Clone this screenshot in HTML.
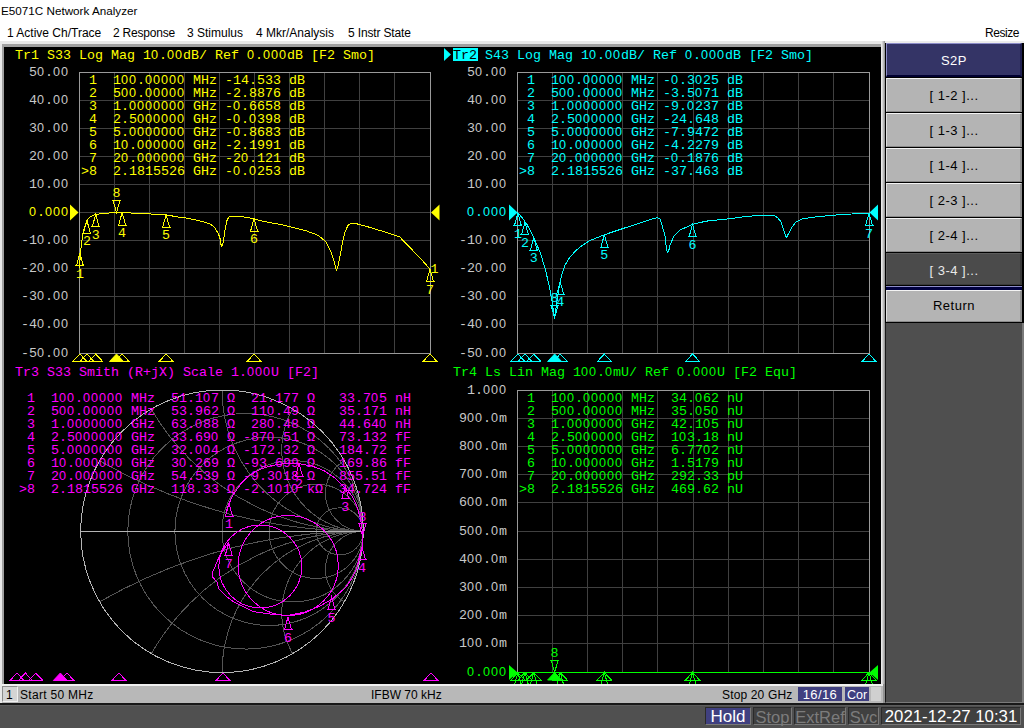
<!DOCTYPE html>
<html><head><meta charset="utf-8"><title>E5071C</title><style>
html,body{margin:0;padding:0}
body{width:1024px;height:728px;overflow:hidden;background:#fff;position:relative}
.a{position:absolute}
.ui{position:absolute;font-family:"Liberation Sans",sans-serif;font-size:12px;line-height:14px;color:#000;white-space:pre}
.m{position:absolute;font-family:"Liberation Mono",monospace;font-size:13.333px;line-height:13px;white-space:pre}
.z{font-style:normal;font-family:"Liberation Sans",sans-serif;font-size:12.6px;letter-spacing:1px;line-height:0}
.btn{position:absolute;left:886px;width:136px;height:34px;background:#b4b4b4;box-sizing:border-box;border-top:1px solid #f4f4f4;border-left:1px solid #e0e0e0;border-bottom:1px solid #8a8a8a;border-right:2px solid #8e8e8e}
.bt{position:absolute;left:886px;width:136px;font-family:"Liberation Sans",sans-serif;font-size:13px;line-height:16px;text-align:center;color:#000;white-space:pre;letter-spacing:0.5px}
</style></head><body>

<div class="ui" style="left:1px;top:4px;font-size:11.7px">E5071C Network Analyzer</div>
<div class="ui" style="left:7px;top:26px;letter-spacing:0px">1 Active Ch/Trace</div>
<div class="ui" style="left:113px;top:26px;letter-spacing:-0.2px">2 Response</div>
<div class="ui" style="left:187px;top:26px;letter-spacing:0px">3 Stimulus</div>
<div class="ui" style="left:256px;top:26px;letter-spacing:0px">4 Mkr/Analysis</div>
<div class="ui" style="left:348px;top:26px;letter-spacing:-0.15px">5 Instr State</div>
<div class="ui" style="left:985px;top:26px;letter-spacing:-0.45px">Resize</div>
<div class="a" style="left:0;top:41px;width:1024px;height:2px;background:#ececec"></div>
<div class="a" style="left:0;top:41px;width:886px;height:645px;background:#e8e8e8"></div>
<div class="a" style="left:2px;top:44px;width:879px;height:640px;background:#a0a0a0"></div>
<div class="a" style="left:4px;top:47px;width:877px;height:637px;background:#000"></div>
<svg class="a" style="left:0;top:0" width="1024" height="728" viewBox="0 0 1024 728"><defs><clipPath id="cc"><rect x="4" y="47" width="877" height="637"/></clipPath></defs><g clip-path="url(#cc)"><path d="M114.5 72V353M149.5 72V353M184.5 72V353M219.5 72V353M254.5 72V353M289.5 72V353M324.5 72V353M359.5 72V353M394.5 72V353M79 100.5H430M79 128.5H430M79 156.5H430M79 184.5H430M79 212.5H430M79 240.5H430M79 268.5H430M79 296.5H430M79 324.5H430" stroke="#404040" stroke-width="1" fill="none" shape-rendering="crispEdges"/>
<path d="M79.5 72.5H430.5V353.5H79.5Z" stroke="#9a9a9a" stroke-width="1" fill="none" shape-rendering="crispEdges"/>
<path d="M444 48L451 54.5L444 61Z" fill="#00ffff"/>
<rect x="453" y="48" width="25" height="13" fill="#00ffff"/>
<path d="M552.5 72V353M587.5 72V353M622.5 72V353M657.5 72V353M693.5 72V353M728.5 72V353M763.5 72V353M798.5 72V353M833.5 72V353M517 100.5H869M517 128.5H869M517 156.5H869M517 184.5H869M517 212.5H869M517 240.5H869M517 268.5H869M517 296.5H869M517 324.5H869" stroke="#404040" stroke-width="1" fill="none" shape-rendering="crispEdges"/>
<path d="M517.5 72.5H869.5V353.5H517.5Z" stroke="#9a9a9a" stroke-width="1" fill="none" shape-rendering="crispEdges"/>
<path d="M552.5 390V672M587.5 390V672M622.5 390V672M657.5 390V672M693.5 390V672M728.5 390V672M763.5 390V672M798.5 390V672M833.5 390V672M517 418.5H869M517 446.5H869M517 474.5H869M517 502.5H869M517 531.5H869M517 559.5H869M517 587.5H869M517 615.5H869M517 643.5H869" stroke="#404040" stroke-width="1" fill="none" shape-rendering="crispEdges"/>
<path d="M517.5 390.5H869.5V672.5H517.5Z" stroke="#9a9a9a" stroke-width="1" fill="none" shape-rendering="crispEdges"/>
<path d="M79.50 268.00 L80.30 256.00 L81.20 246.00 L82.50 236.00 L84.50 227.00 L86.90 220.60 L90.00 217.00 L95.70 214.40 L105.00 213.20 L116.50 212.60 L122.10 212.60 L135.00 213.20 L155.00 214.20 L166.10 214.90 L180.00 217.30 L186.00 218.00 L192.50 219.30 L200.00 221.00 L206.00 222.50 L211.00 224.50 L215.00 228.00 L218.50 234.00 L220.50 240.00 L221.00 244.50 L221.80 247.00 L222.70 244.50 L223.50 240.00 L225.00 230.00 L227.00 220.50 L228.50 217.50 L231.00 216.00 L238.00 216.00 L245.00 217.20 L254.10 218.70 L260.00 220.50 L268.00 222.30 L281.00 224.50 L306.00 230.70 L318.50 235.50 L326.00 242.00 L331.00 252.00 L334.00 261.00 L335.50 267.50 L336.50 270.00 L337.60 267.50 L339.00 261.00 L341.00 251.00 L343.00 240.00 L345.00 232.00 L348.00 225.50 L351.00 223.30 L355.00 223.30 L368.50 227.00 L385.00 232.00 L399.75 237.00 L408.50 246.00 L421.00 259.00 L430.30 269.50" stroke="#ffff00" stroke-width="1" fill="none" stroke-linejoin="round" stroke-linecap="round" shape-rendering="crispEdges"/>
<path d="M75.38 265.84H84.38M76.38 265.84L79.88 253.34L83.38 265.84" stroke="#ffff00" stroke-width="1" fill="none" shape-rendering="crispEdges"/><text x="79.88" y="277.84" fill="#ffff00" font-family="Liberation Mono" font-size="13.333" text-anchor="middle">1</text>
<path d="M82.42 233.11H91.42M83.42 233.11L86.92 220.61L90.42 233.11" stroke="#ffff00" stroke-width="1" fill="none" shape-rendering="crispEdges"/><text x="86.92" y="245.11" fill="#ffff00" font-family="Liberation Mono" font-size="13.333" text-anchor="middle">2</text>
<path d="M91.21 226.87H100.21M92.21 226.87L95.71 214.37L99.21 226.87" stroke="#ffff00" stroke-width="1" fill="none" shape-rendering="crispEdges"/><text x="95.71" y="238.87" fill="#ffff00" font-family="Liberation Mono" font-size="13.333" text-anchor="middle">3</text>
<path d="M117.61 225.11H126.61M118.61 225.11L122.11 212.61L125.61 225.11" stroke="#ffff00" stroke-width="1" fill="none" shape-rendering="crispEdges"/><text x="122.11" y="237.11" fill="#ffff00" font-family="Liberation Mono" font-size="13.333" text-anchor="middle">4</text>
<path d="M161.59 227.44H170.59M162.59 227.44L166.09 214.94L169.59 227.44" stroke="#ffff00" stroke-width="1" fill="none" shape-rendering="crispEdges"/><text x="166.09" y="239.44" fill="#ffff00" font-family="Liberation Mono" font-size="13.333" text-anchor="middle">5</text>
<path d="M249.56 231.18H258.56M250.56 231.18L254.06 218.68L257.56 231.18" stroke="#ffff00" stroke-width="1" fill="none" shape-rendering="crispEdges"/><text x="254.06" y="243.18" fill="#ffff00" font-family="Liberation Mono" font-size="13.333" text-anchor="middle">6</text>
<path d="M425.50 281.54H434.50M426.50 281.54L430.00 269.04L433.50 281.54" stroke="#ffff00" stroke-width="1" fill="none" shape-rendering="crispEdges"/><text x="430.00" y="293.54" fill="#ffff00" font-family="Liberation Mono" font-size="13.333" text-anchor="middle">7</text>
<path d="M112.00 200.07H121.00M113.00 200.07L116.50 212.57L120.00 200.07" stroke="#ffff00" stroke-width="1" fill="none" shape-rendering="crispEdges"/><text x="116.50" y="197.07" fill="#ffff00" font-family="Liberation Mono" font-size="13.333" text-anchor="middle">8</text>
<text x="434.50" y="273.00" fill="#ffff00" font-family="Liberation Mono" font-size="13.333" text-anchor="middle">1</text>
<path d="M70 204.5L78.5 212.5L70 220.5Z" fill="#ffff00"/>
<path d="M439.5 204.5L431 212.5L439.5 220.5Z" fill="#ffff00"/>
<path d="M79.88 354.00L86.88 361.50H72.88Z" fill="none" stroke="#ffff00" stroke-width="1" stroke-linejoin="miter" shape-rendering="crispEdges"/>
<path d="M86.92 354.00L93.92 361.50H79.92Z" fill="none" stroke="#ffff00" stroke-width="1" stroke-linejoin="miter" shape-rendering="crispEdges"/>
<path d="M95.71 354.00L102.71 361.50H88.71Z" fill="none" stroke="#ffff00" stroke-width="1" stroke-linejoin="miter" shape-rendering="crispEdges"/>
<path d="M122.11 354.00L129.11 361.50H115.11Z" fill="none" stroke="#ffff00" stroke-width="1" stroke-linejoin="miter" shape-rendering="crispEdges"/>
<path d="M166.09 354.00L173.09 361.50H159.09Z" fill="none" stroke="#ffff00" stroke-width="1" stroke-linejoin="miter" shape-rendering="crispEdges"/>
<path d="M254.06 354.00L261.06 361.50H247.06Z" fill="none" stroke="#ffff00" stroke-width="1" stroke-linejoin="miter" shape-rendering="crispEdges"/>
<path d="M430.00 354.00L437.00 361.50H423.00Z" fill="none" stroke="#ffff00" stroke-width="1" stroke-linejoin="miter" shape-rendering="crispEdges"/>
<path d="M116.50 354.00L123.50 361.50H109.50Z" fill="#ffff00" stroke="#ffff00" stroke-width="1"/>
<path d="M517.50 212.50 L522.00 217.50 L527.00 224.50 L533.00 236.00 L540.00 252.00 L545.00 268.00 L549.00 285.00 L552.00 301.00 L554.60 317.80 L557.00 301.00 L560.00 282.00 L562.00 274.00 L565.00 265.00 L570.00 257.00 L576.00 250.50 L582.00 245.50 L590.00 240.50 L600.00 236.50 L604.30 234.80 L620.00 229.50 L640.00 223.00 L654.00 218.20 L658.00 217.80 L660.00 219.00 L662.00 225.00 L665.00 236.00 L666.50 249.50 L667.70 253.00 L669.00 249.50 L670.00 245.00 L674.00 236.00 L680.00 230.00 L688.00 226.50 L692.50 224.40 L700.00 222.50 L710.00 220.50 L720.00 219.80 L735.00 218.00 L745.00 216.50 L760.00 215.50 L772.00 215.50 L775.00 216.00 L778.00 218.00 L781.00 222.00 L783.00 228.00 L785.50 235.50 L786.50 237.50 L787.50 235.50 L789.00 233.00 L792.00 227.00 L796.00 222.00 L802.00 219.00 L815.00 217.00 L830.00 215.50 L845.00 214.20 L869.00 213.50" stroke="#00ffff" stroke-width="1" fill="none" stroke-linejoin="round" stroke-linecap="round" shape-rendering="crispEdges"/>
<path d="M513.38 225.85H522.38M514.38 225.85L517.88 213.35L521.38 225.85" stroke="#00ffff" stroke-width="1" fill="none" shape-rendering="crispEdges"/><text x="517.88" y="237.85" fill="#00ffff" font-family="Liberation Mono" font-size="13.333" text-anchor="middle">1</text>
<path d="M520.44 234.85H529.44M521.44 234.85L524.94 222.35L528.44 234.85" stroke="#00ffff" stroke-width="1" fill="none" shape-rendering="crispEdges"/><text x="524.94" y="246.85" fill="#00ffff" font-family="Liberation Mono" font-size="13.333" text-anchor="middle">2</text>
<path d="M529.26 250.36H538.26M530.26 250.36L533.76 237.86L537.26 250.36" stroke="#00ffff" stroke-width="1" fill="none" shape-rendering="crispEdges"/><text x="533.76" y="262.36" fill="#00ffff" font-family="Liberation Mono" font-size="13.333" text-anchor="middle">3</text>
<path d="M555.73 294.26H564.73M556.73 294.26L560.23 281.76L563.73 294.26" stroke="#00ffff" stroke-width="1" fill="none" shape-rendering="crispEdges"/><text x="560.23" y="306.26" fill="#00ffff" font-family="Liberation Mono" font-size="13.333" text-anchor="middle">4</text>
<path d="M599.84 247.33H608.84M600.84 247.33L604.34 234.83L607.84 247.33" stroke="#00ffff" stroke-width="1" fill="none" shape-rendering="crispEdges"/><text x="604.34" y="259.33" fill="#00ffff" font-family="Liberation Mono" font-size="13.333" text-anchor="middle">5</text>
<path d="M688.06 236.88H697.06M689.06 236.88L692.56 224.38L696.06 236.88" stroke="#00ffff" stroke-width="1" fill="none" shape-rendering="crispEdges"/><text x="692.56" y="248.88" fill="#00ffff" font-family="Liberation Mono" font-size="13.333" text-anchor="middle">6</text>
<path d="M864.50 225.53H873.50M865.50 225.53L869.00 213.03L872.50 225.53" stroke="#00ffff" stroke-width="1" fill="none" shape-rendering="crispEdges"/><text x="869.00" y="237.53" fill="#00ffff" font-family="Liberation Mono" font-size="13.333" text-anchor="middle">7</text>
<path d="M550.11 305.27H559.11M551.11 305.27L554.61 317.77L558.11 305.27" stroke="#00ffff" stroke-width="1" fill="none" shape-rendering="crispEdges"/><text x="554.61" y="302.27" fill="#00ffff" font-family="Liberation Mono" font-size="13.333" text-anchor="middle">8</text>
<path d="M509 204.5L517.5 212.5L509 220.5Z" fill="#00ffff"/>
<path d="M878 204.5L869.5 212.5L878 220.5Z" fill="#00ffff"/>
<path d="M517.88 354.00L524.88 361.50H510.88Z" fill="none" stroke="#00ffff" stroke-width="1" stroke-linejoin="miter" shape-rendering="crispEdges"/>
<path d="M524.94 354.00L531.94 361.50H517.94Z" fill="none" stroke="#00ffff" stroke-width="1" stroke-linejoin="miter" shape-rendering="crispEdges"/>
<path d="M533.76 354.00L540.76 361.50H526.76Z" fill="none" stroke="#00ffff" stroke-width="1" stroke-linejoin="miter" shape-rendering="crispEdges"/>
<path d="M560.23 354.00L567.23 361.50H553.23Z" fill="none" stroke="#00ffff" stroke-width="1" stroke-linejoin="miter" shape-rendering="crispEdges"/>
<path d="M604.34 354.00L611.34 361.50H597.34Z" fill="none" stroke="#00ffff" stroke-width="1" stroke-linejoin="miter" shape-rendering="crispEdges"/>
<path d="M692.56 354.00L699.56 361.50H685.56Z" fill="none" stroke="#00ffff" stroke-width="1" stroke-linejoin="miter" shape-rendering="crispEdges"/>
<path d="M869.00 354.00L876.00 361.50H862.00Z" fill="none" stroke="#00ffff" stroke-width="1" stroke-linejoin="miter" shape-rendering="crispEdges"/>
<path d="M554.61 354.00L561.61 361.50H547.61Z" fill="#00ffff" stroke="#00ffff" stroke-width="1"/>
<path d="M517.50 672.50 L869.50 672.50" stroke="#00ff00" stroke-width="1" fill="none" stroke-linejoin="round" stroke-linecap="round" shape-rendering="crispEdges"/>
<path d="M513.38 685.00H522.38M514.38 685.00L517.88 672.50L521.38 685.00" stroke="#00ff00" stroke-width="1" fill="none" shape-rendering="crispEdges"/><text x="517.88" y="697.00" fill="#00ff00" font-family="Liberation Mono" font-size="13.333" text-anchor="middle"></text>
<path d="M520.44 685.00H529.44M521.44 685.00L524.94 672.50L528.44 685.00" stroke="#00ff00" stroke-width="1" fill="none" shape-rendering="crispEdges"/><text x="524.94" y="697.00" fill="#00ff00" font-family="Liberation Mono" font-size="13.333" text-anchor="middle"></text>
<path d="M529.26 685.00H538.26M530.26 685.00L533.76 672.50L537.26 685.00" stroke="#00ff00" stroke-width="1" fill="none" shape-rendering="crispEdges"/><text x="533.76" y="697.00" fill="#00ff00" font-family="Liberation Mono" font-size="13.333" text-anchor="middle"></text>
<path d="M555.73 685.00H564.73M556.73 685.00L560.23 672.50L563.73 685.00" stroke="#00ff00" stroke-width="1" fill="none" shape-rendering="crispEdges"/><text x="560.23" y="697.00" fill="#00ff00" font-family="Liberation Mono" font-size="13.333" text-anchor="middle"></text>
<path d="M599.84 685.00H608.84M600.84 685.00L604.34 672.50L607.84 685.00" stroke="#00ff00" stroke-width="1" fill="none" shape-rendering="crispEdges"/><text x="604.34" y="697.00" fill="#00ff00" font-family="Liberation Mono" font-size="13.333" text-anchor="middle"></text>
<path d="M688.06 685.00H697.06M689.06 685.00L692.56 672.50L696.06 685.00" stroke="#00ff00" stroke-width="1" fill="none" shape-rendering="crispEdges"/><text x="692.56" y="697.00" fill="#00ff00" font-family="Liberation Mono" font-size="13.333" text-anchor="middle"></text>
<path d="M864.50 685.00H873.50M865.50 685.00L869.00 672.50L872.50 685.00" stroke="#00ff00" stroke-width="1" fill="none" shape-rendering="crispEdges"/><text x="869.00" y="697.00" fill="#00ff00" font-family="Liberation Mono" font-size="13.333" text-anchor="middle"></text>
<path d="M550.11 660.00H559.11M551.11 660.00L554.61 672.50L558.11 660.00" stroke="#00ff00" stroke-width="1" fill="none" shape-rendering="crispEdges"/><text x="554.61" y="657.00" fill="#00ff00" font-family="Liberation Mono" font-size="13.333" text-anchor="middle">8</text>
<path d="M509 665L517.5 672.5L509 680Z" fill="#00ff00"/>
<path d="M878 665L869.5 672.5L878 680Z" fill="#00ff00"/>
<path d="M517.88 672.50L524.88 680.00H510.88Z" fill="none" stroke="#00ff00" stroke-width="1" stroke-linejoin="miter" shape-rendering="crispEdges"/>
<path d="M524.94 672.50L531.94 680.00H517.94Z" fill="none" stroke="#00ff00" stroke-width="1" stroke-linejoin="miter" shape-rendering="crispEdges"/>
<path d="M533.76 672.50L540.76 680.00H526.76Z" fill="none" stroke="#00ff00" stroke-width="1" stroke-linejoin="miter" shape-rendering="crispEdges"/>
<path d="M560.23 672.50L567.23 680.00H553.23Z" fill="none" stroke="#00ff00" stroke-width="1" stroke-linejoin="miter" shape-rendering="crispEdges"/>
<path d="M604.34 672.50L611.34 680.00H597.34Z" fill="none" stroke="#00ff00" stroke-width="1" stroke-linejoin="miter" shape-rendering="crispEdges"/>
<path d="M692.56 672.50L699.56 680.00H685.56Z" fill="none" stroke="#00ff00" stroke-width="1" stroke-linejoin="miter" shape-rendering="crispEdges"/>
<path d="M869.00 672.50L876.00 680.00H862.00Z" fill="none" stroke="#00ff00" stroke-width="1" stroke-linejoin="miter" shape-rendering="crispEdges"/>
<path d="M554.61 672.50L561.61 680.00H547.61Z" fill="#00ff00" stroke="#00ff00" stroke-width="1"/>
<g stroke="#555555" stroke-width="1" fill="none" shape-rendering="crispEdges"><circle cx="245.55" cy="531.30" r="117.75"/><circle cx="269.10" cy="531.30" r="94.20"/><circle cx="292.65" cy="531.30" r="70.65"/><circle cx="316.20" cy="531.30" r="47.10"/><circle cx="339.75" cy="531.30" r="23.55"/></g>
<clipPath id="sc"><circle cx="222" cy="531.3" r="141.3"/></clipPath>
<g stroke="#555555" stroke-width="1" fill="none" clip-path="url(#sc)" shape-rendering="crispEdges"><circle cx="363.30" cy="3.96" r="527.34"/><circle cx="363.30" cy="1058.64" r="527.34"/><circle cx="363.30" cy="286.56" r="244.74"/><circle cx="363.30" cy="776.04" r="244.74"/><circle cx="363.30" cy="390.00" r="141.30"/><circle cx="363.30" cy="672.60" r="141.30"/><circle cx="363.30" cy="449.72" r="81.58"/><circle cx="363.30" cy="612.88" r="81.58"/><circle cx="363.30" cy="493.44" r="37.86"/><circle cx="363.30" cy="569.16" r="37.86"/></g>
<circle cx="222" cy="531.3" r="141.3" stroke="#b4b4b4" stroke-width="1" fill="none" shape-rendering="crispEdges"/>
<path d="M80.70 531.00H363.30" stroke="#b4b4b4" stroke-width="1" shape-rendering="crispEdges"/>
<path d="M226.00 512.00 L229.00 503.60 L233.00 495.00 L241.40 483.00 L250.00 475.00 L260.70 469.00 L272.00 465.50 L285.40 463.50 L299.00 463.70 L312.00 466.00 L323.80 470.60 L335.00 478.00 L345.30 488.00 L352.00 496.00 L356.80 506.00 L360.50 519.00 L362.30 531.00 L362.50 536.00 L362.00 547.50 L359.50 558.00 L356.80 568.00 L352.00 578.00 L345.80 587.40 L338.00 594.00 L331.50 599.70 L318.00 607.00 L305.00 612.00 L288.00 615.50 L270.00 614.00 L253.00 611.50 L240.00 605.00 L233.80 602.00 L226.00 596.00 L218.50 588.50 L217.50 582.70 L212.70 577.00 L213.00 571.00 L215.60 565.40 L219.00 557.00 L223.30 550.00 L228.70 542.50" stroke="#ff00ff" stroke-width="1" fill="none" stroke-linejoin="round" stroke-linecap="round" shape-rendering="crispEdges"/>
<circle cx="288.2" cy="565.5" r="50" stroke="#ff00ff" stroke-width="1" fill="none" shape-rendering="crispEdges"/>
<circle cx="260.3" cy="566.5" r="41.5" stroke="#ff00ff" stroke-width="1" fill="none" shape-rendering="crispEdges"/>
<path d="M224.50 516.10H233.50M225.50 516.10L229.00 503.60L232.50 516.10" stroke="#ff00ff" stroke-width="1" fill="none" shape-rendering="crispEdges"/><text x="229.00" y="528.10" fill="#ff00ff" font-family="Liberation Mono" font-size="13.333" text-anchor="middle">1</text>
<path d="M294.50 476.20H303.50M295.50 476.20L299.00 463.70L302.50 476.20" stroke="#ff00ff" stroke-width="1" fill="none" shape-rendering="crispEdges"/><text x="299.00" y="488.20" fill="#ff00ff" font-family="Liberation Mono" font-size="13.333" text-anchor="middle">2</text>
<path d="M340.80 498.50H349.80M341.80 498.50L345.30 486.00L348.80 498.50" stroke="#ff00ff" stroke-width="1" fill="none" shape-rendering="crispEdges"/><text x="345.30" y="510.50" fill="#ff00ff" font-family="Liberation Mono" font-size="13.333" text-anchor="middle">3</text>
<path d="M357.50 559.50H366.50M358.50 559.50L362.00 547.00L365.50 559.50" stroke="#ff00ff" stroke-width="1" fill="none" shape-rendering="crispEdges"/><text x="362.00" y="571.50" fill="#ff00ff" font-family="Liberation Mono" font-size="13.333" text-anchor="middle">4</text>
<path d="M327.00 609.50H336.00M328.00 609.50L331.50 597.00L335.00 609.50" stroke="#ff00ff" stroke-width="1" fill="none" shape-rendering="crispEdges"/><text x="331.50" y="621.50" fill="#ff00ff" font-family="Liberation Mono" font-size="13.333" text-anchor="middle">5</text>
<path d="M283.50 629.50H292.50M284.50 629.50L288.00 617.00L291.50 629.50" stroke="#ff00ff" stroke-width="1" fill="none" shape-rendering="crispEdges"/><text x="288.00" y="641.50" fill="#ff00ff" font-family="Liberation Mono" font-size="13.333" text-anchor="middle">6</text>
<path d="M224.20 555.50H233.20M225.20 555.50L228.70 543.00L232.20 555.50" stroke="#ff00ff" stroke-width="1" fill="none" shape-rendering="crispEdges"/><text x="228.70" y="567.50" fill="#ff00ff" font-family="Liberation Mono" font-size="13.333" text-anchor="middle">7</text>
<path d="M358.00 523.50H367.00M359.00 523.50L362.50 536.00L366.00 523.50" stroke="#ff00ff" stroke-width="1" fill="none" shape-rendering="crispEdges"/><text x="362.50" y="520.50" fill="#ff00ff" font-family="Liberation Mono" font-size="13.333" text-anchor="middle">8</text>
<path d="M17.04 673.00L24.04 680.50H10.04Z" fill="none" stroke="#ff00ff" stroke-width="1" stroke-linejoin="miter" shape-rendering="crispEdges"/>
<path d="M25.36 673.00L32.36 680.50H18.36Z" fill="none" stroke="#ff00ff" stroke-width="1" stroke-linejoin="miter" shape-rendering="crispEdges"/>
<path d="M35.76 673.00L42.76 680.50H28.76Z" fill="none" stroke="#ff00ff" stroke-width="1" stroke-linejoin="miter" shape-rendering="crispEdges"/>
<path d="M66.96 673.00L73.96 680.50H59.96Z" fill="none" stroke="#ff00ff" stroke-width="1" stroke-linejoin="miter" shape-rendering="crispEdges"/>
<path d="M118.97 673.00L125.97 680.50H111.97Z" fill="none" stroke="#ff00ff" stroke-width="1" stroke-linejoin="miter" shape-rendering="crispEdges"/>
<path d="M222.98 673.00L229.98 680.50H215.98Z" fill="none" stroke="#ff00ff" stroke-width="1" stroke-linejoin="miter" shape-rendering="crispEdges"/>
<path d="M431.00 673.00L438.00 680.50H424.00Z" fill="none" stroke="#ff00ff" stroke-width="1" stroke-linejoin="miter" shape-rendering="crispEdges"/>
<path d="M60.34 673.00L67.34 680.50H53.34Z" fill="#ff00ff" stroke="#ff00ff" stroke-width="1"/></g></svg>
<div class="m" style="left:15px;top:49px;color:#ffff00">Tr1 S33 Log Mag 1<i class="z">0</i>.<i class="z">00</i>dB/ Ref <i class="z">0</i>.<i class="z">000</i>dB [F2 Smo]</div>
<div class="m" style="left:-51px;width:120px;text-align:right;top:66px;color:#c8c8c8">5<i class="z">0</i>.<i class="z">00</i></div>
<div class="m" style="left:-51px;width:120px;text-align:right;top:94px;color:#c8c8c8">4<i class="z">0</i>.<i class="z">00</i></div>
<div class="m" style="left:-51px;width:120px;text-align:right;top:122px;color:#c8c8c8">3<i class="z">0</i>.<i class="z">00</i></div>
<div class="m" style="left:-51px;width:120px;text-align:right;top:150px;color:#c8c8c8">2<i class="z">0</i>.<i class="z">00</i></div>
<div class="m" style="left:-51px;width:120px;text-align:right;top:178px;color:#c8c8c8">1<i class="z">0</i>.<i class="z">00</i></div>
<div class="m" style="left:-51px;width:120px;text-align:right;top:206px;color:#ffff00"><i class="z">0</i>.<i class="z">000</i></div>
<div class="m" style="left:-51px;width:120px;text-align:right;top:234px;color:#c8c8c8">-1<i class="z">0</i>.<i class="z">00</i></div>
<div class="m" style="left:-51px;width:120px;text-align:right;top:262px;color:#c8c8c8">-2<i class="z">0</i>.<i class="z">00</i></div>
<div class="m" style="left:-51px;width:120px;text-align:right;top:290px;color:#c8c8c8">-3<i class="z">0</i>.<i class="z">00</i></div>
<div class="m" style="left:-51px;width:120px;text-align:right;top:318px;color:#c8c8c8">-4<i class="z">0</i>.<i class="z">00</i></div>
<div class="m" style="left:-51px;width:120px;text-align:right;top:347px;color:#c8c8c8">-5<i class="z">0</i>.<i class="z">00</i></div>
<div class="m" style="left:81px;top:74px;color:#ffff00"> 1  1<i class="z">00</i>.<i class="z">00000</i> MHz -14.533 dB
 2  5<i class="z">00</i>.<i class="z">00000</i> MHz -2.8876 dB
 3  1.<i class="z">0000000</i> GHz -<i class="z">0</i>.6658 dB
 4  2.5<i class="z">000000</i> GHz -<i class="z">0</i>.<i class="z">0</i>398 dB
 5  5.<i class="z">0000000</i> GHz -<i class="z">0</i>.8683 dB
 6  1<i class="z">0</i>.<i class="z">000000</i> GHz -2.1991 dB
 7  2<i class="z">0</i>.<i class="z">000000</i> GHz -2<i class="z">0</i>.121 dB
&gt;8  2.1815526 GHz -<i class="z">0</i>.<i class="z">0</i>253 dB</div>
<div class="m" style="left:453px;top:49px;color:#000">Tr2</div>
<div class="m" style="left:485px;top:49px;color:#00ffff">S43 Log Mag 1<i class="z">0</i>.<i class="z">00</i>dB/ Ref <i class="z">0</i>.<i class="z">000</i>dB [F2 Smo]</div>
<div class="m" style="left:387px;width:120px;text-align:right;top:66px;color:#c8c8c8">5<i class="z">0</i>.<i class="z">00</i></div>
<div class="m" style="left:387px;width:120px;text-align:right;top:94px;color:#c8c8c8">4<i class="z">0</i>.<i class="z">00</i></div>
<div class="m" style="left:387px;width:120px;text-align:right;top:122px;color:#c8c8c8">3<i class="z">0</i>.<i class="z">00</i></div>
<div class="m" style="left:387px;width:120px;text-align:right;top:150px;color:#c8c8c8">2<i class="z">0</i>.<i class="z">00</i></div>
<div class="m" style="left:387px;width:120px;text-align:right;top:178px;color:#c8c8c8">1<i class="z">0</i>.<i class="z">00</i></div>
<div class="m" style="left:387px;width:120px;text-align:right;top:206px;color:#00ffff"><i class="z">0</i>.<i class="z">000</i></div>
<div class="m" style="left:387px;width:120px;text-align:right;top:234px;color:#c8c8c8">-1<i class="z">0</i>.<i class="z">00</i></div>
<div class="m" style="left:387px;width:120px;text-align:right;top:262px;color:#c8c8c8">-2<i class="z">0</i>.<i class="z">00</i></div>
<div class="m" style="left:387px;width:120px;text-align:right;top:290px;color:#c8c8c8">-3<i class="z">0</i>.<i class="z">00</i></div>
<div class="m" style="left:387px;width:120px;text-align:right;top:318px;color:#c8c8c8">-4<i class="z">0</i>.<i class="z">00</i></div>
<div class="m" style="left:387px;width:120px;text-align:right;top:347px;color:#c8c8c8">-5<i class="z">0</i>.<i class="z">00</i></div>
<div class="m" style="left:519px;top:74px;color:#00ffff"> 1  1<i class="z">00</i>.<i class="z">00000</i> MHz -<i class="z">0</i>.3<i class="z">0</i>25 dB
 2  5<i class="z">00</i>.<i class="z">00000</i> MHz -3.5<i class="z">0</i>71 dB
 3  1.<i class="z">0000000</i> GHz -9.<i class="z">0</i>237 dB
 4  2.5<i class="z">000000</i> GHz -24.648 dB
 5  5.<i class="z">0000000</i> GHz -7.9472 dB
 6  1<i class="z">0</i>.<i class="z">000000</i> GHz -4.2279 dB
 7  2<i class="z">0</i>.<i class="z">000000</i> GHz -<i class="z">0</i>.1876 dB
&gt;8  2.1815526 GHz -37.463 dB</div>
<div class="m" style="left:15px;top:366px;color:#ff00ff">Tr3 S33 Smith (R+jX) Scale 1.<i class="z">000</i>U [F2]</div>
<div class="m" style="left:453px;top:366px;color:#00ff00">Tr4 Ls Lin Mag 1<i class="z">00</i>.<i class="z">0</i>mU/ Ref <i class="z">0</i>.<i class="z">000</i>U [F2 Equ]</div>
<div class="m" style="left:387px;width:120px;text-align:right;top:384px;color:#c8c8c8">1.<i class="z">000</i></div>
<div class="m" style="left:387px;width:120px;text-align:right;top:412px;color:#c8c8c8">9<i class="z">00</i>.<i class="z">0</i>m</div>
<div class="m" style="left:387px;width:120px;text-align:right;top:440px;color:#c8c8c8">8<i class="z">00</i>.<i class="z">0</i>m</div>
<div class="m" style="left:387px;width:120px;text-align:right;top:468px;color:#c8c8c8">7<i class="z">00</i>.<i class="z">0</i>m</div>
<div class="m" style="left:387px;width:120px;text-align:right;top:496px;color:#c8c8c8">6<i class="z">00</i>.<i class="z">0</i>m</div>
<div class="m" style="left:387px;width:120px;text-align:right;top:525px;color:#c8c8c8">5<i class="z">00</i>.<i class="z">0</i>m</div>
<div class="m" style="left:387px;width:120px;text-align:right;top:553px;color:#c8c8c8">4<i class="z">00</i>.<i class="z">0</i>m</div>
<div class="m" style="left:387px;width:120px;text-align:right;top:581px;color:#c8c8c8">3<i class="z">00</i>.<i class="z">0</i>m</div>
<div class="m" style="left:387px;width:120px;text-align:right;top:609px;color:#c8c8c8">2<i class="z">00</i>.<i class="z">0</i>m</div>
<div class="m" style="left:387px;width:120px;text-align:right;top:637px;color:#c8c8c8">1<i class="z">00</i>.<i class="z">0</i>m</div>
<div class="m" style="left:387px;width:120px;text-align:right;top:666px;color:#00ff00"><i class="z">0</i>.<i class="z">000</i></div>
<div class="m" style="left:519px;top:392px;color:#00ff00"> 1  1<i class="z">00</i>.<i class="z">00000</i> MHz  34.<i class="z">0</i>62 nU
 2  5<i class="z">00</i>.<i class="z">00000</i> MHz  35.<i class="z">0</i>5<i class="z">0</i> nU
 3  1.<i class="z">0000000</i> GHz  42.1<i class="z">0</i>5 nU
 4  2.5<i class="z">000000</i> GHz  1<i class="z">0</i>3.18 nU
 5  5.<i class="z">0000000</i> GHz  6.77<i class="z">0</i>2 nU
 6  1<i class="z">0</i>.<i class="z">000000</i> GHz  1.5179 nU
 7  2<i class="z">0</i>.<i class="z">000000</i> GHz  292.33 pU
&gt;8  2.1815526 GHz  469.62 nU</div>
<div class="m" style="left:19px;top:392px;color:#ff00ff"> 1  1<i class="z">00</i>.<i class="z">00000</i> MHz  51.1<i class="z">0</i>7 Ω  21.177 Ω   33.7<i class="z">0</i>5 nH
 2  5<i class="z">00</i>.<i class="z">00000</i> MHz  53.962 Ω  11<i class="z">0</i>.49 Ω   35.171 nH
 3  1.<i class="z">0000000</i> GHz  63.<i class="z">0</i>88 Ω  28<i class="z">0</i>.48 Ω   44.64<i class="z">0</i> nH
 4  2.5<i class="z">000000</i> GHz  33.69<i class="z">0</i> Ω -87<i class="z">0</i>.51 Ω   73.132 fF
 5  5.<i class="z">0000000</i> GHz  32.<i class="z">00</i>4 Ω -172.32 Ω   184.72 fF
 6  1<i class="z">0</i>.<i class="z">000000</i> GHz  3<i class="z">0</i>.269 Ω -93.699 Ω   169.86 fF
 7  2<i class="z">0</i>.<i class="z">000000</i> GHz  54.539 Ω -9.3<i class="z">0</i>18 Ω   855.51 fF
&gt;8  2.1815526 GHz  118.33 Ω -2.1<i class="z">0</i>1<i class="z">0</i> kΩ  34.724 fF</div>
<div class="a" style="left:881px;top:41px;width:4px;height:663px;background:linear-gradient(to right,#f4f4f4,#c8c8c8 50%,#8c8c8c)"></div>
<div class="a" style="left:885px;top:43px;width:139px;height:280px;background:#000"></div>
<div class="a" style="left:885px;top:323px;width:139px;height:380px;background:#4f4f4f;box-sizing:border-box;border-left:1px solid #1a1a1a;border-right:2px solid #7a7a7a;border-bottom:1px solid #7a7a7a"></div>
<div class="btn" style="top:43px;height:34px;background:#343466;border-top-color:#8c8cc8;border-left-color:#8c8cc8;border-bottom:2px solid #000030;border-right-color:#202050;"></div>
<div class="bt" style="top:53px;color:#fff">S2P</div>
<div class="btn" style="top:78px;height:34px;"></div>
<div class="bt" style="top:88px;color:#000">[ 1-2 ]...</div>
<div class="btn" style="top:113px;height:34px;"></div>
<div class="bt" style="top:123px;color:#000">[ 1-3 ]...</div>
<div class="btn" style="top:148px;height:34px;"></div>
<div class="bt" style="top:158px;color:#000">[ 1-4 ]...</div>
<div class="btn" style="top:183px;height:34px;"></div>
<div class="bt" style="top:193px;color:#000">[ 2-3 ]...</div>
<div class="btn" style="top:218px;height:34px;"></div>
<div class="bt" style="top:228px;color:#000">[ 2-4 ]...</div>
<div class="btn" style="top:253px;height:32px;background:#4b4b4b;border-top-color:#5c5c5c;border-left-color:#5c5c5c;border-bottom-color:#3a3a3a;border-right-color:#3a3a3a;"></div>
<div class="bt" style="top:263px;color:#e8e8e8">[ 3-4 ]...</div>
<div class="btn" style="top:290px;height:32px;"></div>
<div class="bt" style="top:298px;color:#000">Return</div>
<div class="a" style="left:886px;top:286px;width:136px;height:3px;background:#000040;border-top:1px solid #8c8cc8"></div>
<div class="a" style="left:0;top:684px;width:885px;height:20px;background:#909090"></div>
<div class="a" style="left:0;top:684px;width:883px;height:2px;background:#f0f0f0"></div>
<div class="a" style="left:0;top:686px;width:883px;height:17px;background:#b8b8b8"></div>
<div class="a" style="left:0;top:684px;width:2px;height:19px;background:#e8e8e8"></div>
<div class="a" style="left:2px;top:686px;width:16px;height:16px;background:#d4d4d4;box-sizing:border-box;border-top:1px solid #8c8c8c;border-left:1px solid #8c8c8c;border-bottom:1px solid #f0f0f0;border-right:1px solid #f0f0f0"></div>
<div class="ui" style="left:6px;top:688px">1</div>
<div class="ui" style="left:20px;top:688px;letter-spacing:0.3px">Start 50 MHz</div>
<div class="ui" style="left:371px;top:688px">IFBW 70 kHz</div>
<div class="ui" style="left:722px;top:688px;letter-spacing:0.15px">Stop 20 GHz</div>
<div class="a" style="left:798px;top:687px;width:44px;height:14px;background:#404080"></div>
<div class="ui" style="left:798px;top:688px;width:44px;text-align:center;color:#fff;font-size:13px;letter-spacing:0.4px">16/16</div>
<div class="a" style="left:845px;top:687px;width:24px;height:14px;background:#404080"></div>
<div class="ui" style="left:845px;top:688px;width:24px;text-align:center;color:#fff;font-size:12.5px">Cor</div>
<div class="a" style="left:871px;top:687px;width:10px;height:14px;background:#d0d0d0"></div>
<div class="a" style="left:0;top:703px;width:1024px;height:25px;background:#505050"></div>
<div class="a" style="left:0;top:703px;width:1024px;height:2px;background:#181818"></div>
<div class="a" style="left:0;top:705px;width:1024px;height:1px;background:#5c5c5c"></div>
<div class="a" style="left:705px;top:707px;width:46px;height:18px;background:#404080;box-sizing:border-box;border-bottom:1px solid #787878;border-right:1px solid #787878;border-top:1px solid #2a2a2a;border-left:1px solid #2a2a2a"></div>
<div class="ui" style="left:705px;top:707px;width:46px;text-align:center;color:#fff;font-size:17px;line-height:20px">Hold</div>
<div class="a" style="left:753px;top:707px;width:39px;height:18px;background:#404040;box-sizing:border-box;border-bottom:1px solid #787878;border-right:1px solid #787878;border-top:1px solid #2a2a2a;border-left:1px solid #2a2a2a"></div>
<div class="ui" style="left:753px;top:707px;width:39px;text-align:center;color:#7c7c7c;font-size:16.5px;line-height:20px">Stop</div>
<div class="a" style="left:794px;top:707px;width:52px;height:18px;background:#404040;box-sizing:border-box;border-bottom:1px solid #787878;border-right:1px solid #787878;border-top:1px solid #2a2a2a;border-left:1px solid #2a2a2a"></div>
<div class="ui" style="left:794px;top:707px;width:52px;text-align:center;color:#7c7c7c;font-size:16.5px;line-height:20px">ExtRef</div>
<div class="a" style="left:848px;top:707px;width:31px;height:18px;background:#404040;box-sizing:border-box;border-bottom:1px solid #787878;border-right:1px solid #787878;border-top:1px solid #2a2a2a;border-left:1px solid #2a2a2a"></div>
<div class="ui" style="left:848px;top:707px;width:31px;text-align:center;color:#7c7c7c;font-size:16.5px;line-height:20px">Svc</div>
<div class="a" style="left:881px;top:707px;width:140px;height:18px;background:#404040;box-sizing:border-box;border-bottom:1px solid #787878;border-right:1px solid #787878;border-top:1px solid #2a2a2a;border-left:1px solid #2a2a2a"></div>
<div class="ui" style="left:881px;top:707px;width:140px;text-align:center;color:#fff;font-size:16.8px;line-height:20px">2021-12-27 10:31</div>
</body></html>
